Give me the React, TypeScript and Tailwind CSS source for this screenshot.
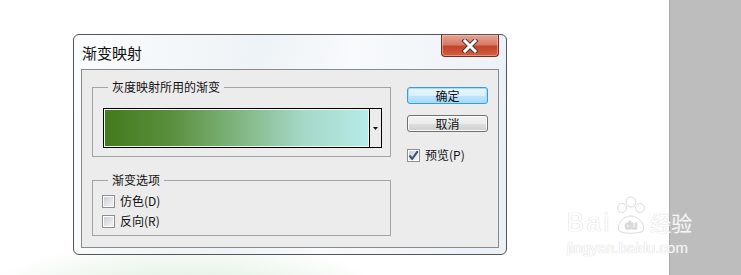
import React from 'react';

function CheckBox({ checked = false }: { checked?: boolean }) {
  return (
    <span className="flex h-[13px] w-[13px] shrink-0 items-center justify-center border border-[#8e8f8f] bg-white p-[1px]">
      <span className="relative flex h-full w-full items-center justify-center bg-[linear-gradient(135deg,#cbcfd5,#f4f4f4)]">
        {checked && (
          <svg width="11" height="11" viewBox="0 0 11 11" className="absolute">
            <path d="M1.5 5.5 L4.2 8.8 L9.8 1.2" fill="none" stroke="#3a4f82" strokeWidth="2" />
          </svg>
        )}
      </span>
    </span>
  );
}

function DlgButton({ label, primary = false }: { label: string; primary?: boolean }) {
  return (
    <button
      className={
        'flex h-[17px] w-[81px] items-center justify-center rounded-[3px] border text-[12px] leading-none text-[#111] ' +
        (primary
          ? 'border-[#3c9cd8] bg-[linear-gradient(#eaf6fd_0%,#d9f0fc_50%,#bee6fd_51%,#a7d9f5_100%)] shadow-[inset_0_0_0_1px_#a6dcf7]'
          : 'border-[#707070] bg-[linear-gradient(#f2f2f2_0%,#ebebeb_50%,#dddddd_51%,#cfcfcf_100%)] shadow-[inset_0_0_0_1px_#fbfbfb]')
      }
    >
      {label}
    </button>
  );
}

export default function App() {
  return (
    <div className="flex h-[275px] w-[741px] overflow-hidden bg-white font-['Noto_Sans_CJK_SC',sans-serif] text-[#111]">
      <div className="relative flex-1 bg-[radial-gradient(210px_60px_at_185px_300px,#d9ebd9,#eef6ee_55%,#ffffff)] pl-[73px] pt-[34px]">
        {/* dialog window */}
        <div className="flex h-[221px] w-[434px] flex-col rounded-[6px] border border-[#555] bg-[linear-gradient(100deg,#fbfcfd_0%,#eef3f7_40%,#f8fafc_60%,#e9f0f6_100%)] px-[7px] pb-[6px]">
          <div className="flex h-[34px] items-start justify-between">
            <span className="ml-[1px] mt-[8px] text-[15px] leading-[20px] text-[#111]">渐变映射</span>
            <div className="flex h-[22px] w-[58px] items-center justify-center rounded-b-[4px] border border-t-0 border-[#7a2a20] bg-[linear-gradient(#e6a394_0%,#d87b66_45%,#c4432a_55%,#d2603f_100%)] shadow-[inset_0_0_0_1px_rgba(255,200,190,0.5)]">
              <svg width="20" height="14" viewBox="0 0 20 14">
                <path d="M5 2 L15 12 M15 2 L5 12" stroke="#4a3a38" strokeWidth="5" strokeLinecap="square" />
                <path d="M5 2 L15 12 M15 2 L5 12" stroke="#ffffff" strokeWidth="3" strokeLinecap="square" />
              </svg>
            </div>
          </div>

          {/* client area */}
          <div className="flex flex-1 border border-[#8a8a8a] bg-[#ececec] text-[12px]">
            <div className="pl-[10px] pt-[9px]">
              <fieldset className="w-[299px] border border-[#a3a3a3] pb-[8px]">
                <legend className="ml-[15px] px-[4px] text-[12px] leading-[16px]">灰度映射所用的渐变</legend>
                <div className="ml-[10px] mt-[13px] flex h-[40px] w-[279px] border border-black bg-[#ececec]">
                  <div className="flex-1 border border-[#f2f7e8] bg-[linear-gradient(90deg,#437a1c_0%,#5a8f3e_25%,#7fb47f_50%,#a5d8c7_75%,#b6ebe8_100%)]" />
                  <div className="flex w-[12px] items-center justify-center border-l border-black">
                    <svg width="5" height="3" viewBox="0 0 5 3">
                      <path d="M0 0 H5 L2.5 3 Z" fill="#111" />
                    </svg>
                  </div>
                </div>
              </fieldset>

              <fieldset className="mt-[15px] w-[299px] border border-[#a3a3a3] pb-[4px] pt-[3px]">
                <legend className="ml-[15px] px-[4px] text-[12px] leading-[16px]">渐变选项</legend>
                <label className="ml-[9px] flex h-[20px] items-center gap-[5px]">
                  <CheckBox />
                  <span>仿色(D)</span>
                </label>
                <label className="ml-[9px] flex h-[20px] items-center gap-[5px]">
                  <CheckBox />
                  <span>反向(R)</span>
                </label>
              </fieldset>
            </div>

            <div className="ml-[16px] flex flex-col pt-[17px]">
              <DlgButton label="确定" primary />
              <div className="mt-[11px]">
                <DlgButton label="取消" />
              </div>
              <label className="mt-[15px] flex h-[16px] items-center gap-[5px]">
                <CheckBox checked />
                <span>预览(P)</span>
              </label>
            </div>
          </div>
        </div>

        {/* watermark */}
        <div className="absolute left-[567px] top-[196px] z-10 flex w-max flex-col items-start whitespace-nowrap text-white opacity-85 [text-shadow:0_0_1px_#cfcfcf,0_0_1px_#cfcfcf]">
          <div className="flex items-end gap-[2px]">
            <span className="font-['Liberation_Sans',sans-serif] text-[25px] leading-[24px] tracking-[3px]">Bai</span>
            <svg width="34" height="38" viewBox="0 0 34 38">
              <g fill="none" stroke="#d6d6d6" strokeWidth="1">
                <circle cx="8" cy="12" r="4.5" />
                <circle cx="17" cy="6" r="5" />
                <circle cx="26" cy="12" r="4.5" />
                <path d="M5 35 C2 28 10 20 17 20 C24 20 32 28 29 35 C25 38 9 38 5 35 Z" />
              </g>
              <text x="17" y="33" textAnchor="middle" fontSize="11" fill="#fff" stroke="#d0d0d0" strokeWidth="0.5" fontFamily="Liberation Sans">du</text>
            </svg>
            <span className="text-[21px] leading-[24px]">经验</span>
          </div>
          <span className="mt-[6px] font-['Liberation_Sans',sans-serif] text-[15px] leading-[15px]">jingyan.baidu.com</span>
        </div>
      </div>
      <div className="w-[72px] border-l border-[#a9a9a9] bg-[#bdbdbd]" />
    </div>
  );
}
